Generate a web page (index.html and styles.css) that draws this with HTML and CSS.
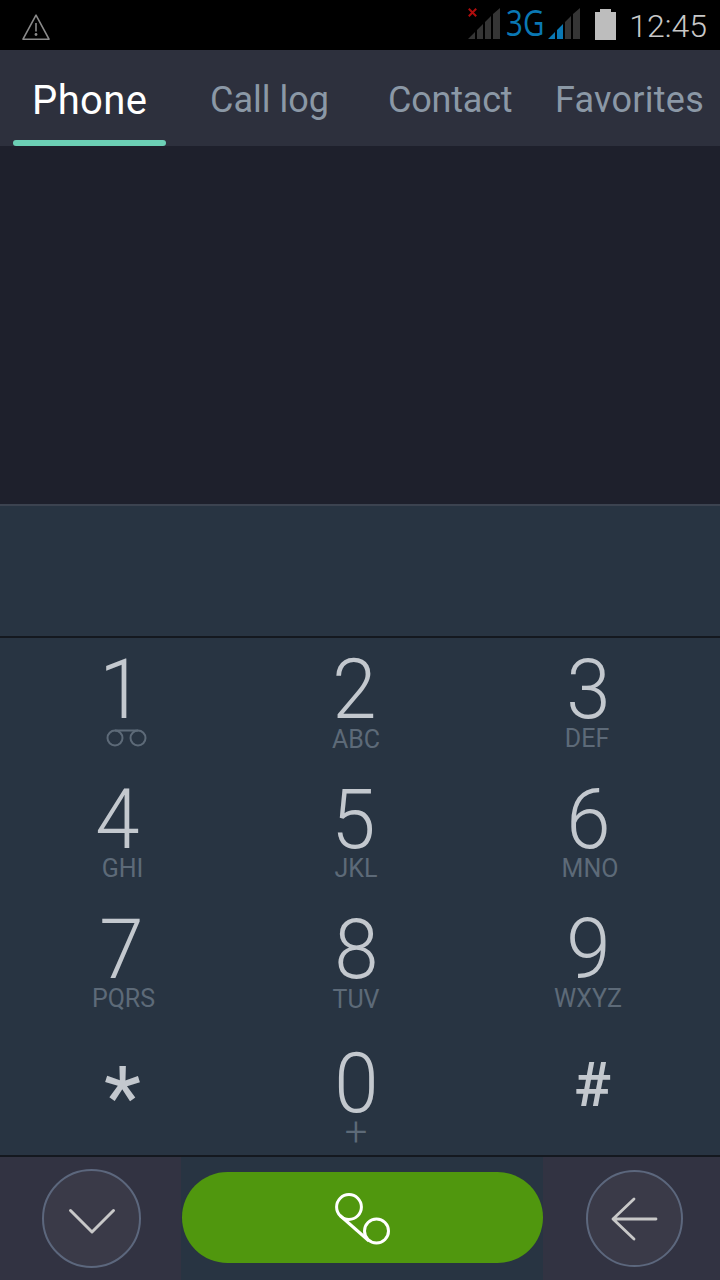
FILE: index.html
```html
<!DOCTYPE html>
<html lang="en">
<head>
<meta charset="utf-8">
<title>Phone</title>
<link rel="stylesheet" href="styles.css">
</head>
<body>
<div class="phone">
  <header class="status">
    <svg class="warn" width="30" height="28" viewBox="0 0 30 28"><path d="M15 1.2 L2 25.2 H28 Z" fill="none" stroke="#8a8a8a" stroke-width="1.6" stroke-linejoin="round"/><path d="M15 9V17.5" stroke="#8a8a8a" stroke-width="1.6"/><circle cx="15" cy="20.5" r="1.4" fill="#8a8a8a"/></svg>
    <div class="status-right">
      <svg class="sig" width="32" height="31" viewBox="0 0 32 31"><path d="M.8.8L8.2 8.2M8.2.8L.8 8.2" stroke="#b00d0d" stroke-width="2"/><path d="M0 31L7 24V31ZM9 31V22L15 16V31ZM17 31V14L23 8V31ZM25 31V6L32 0V31Z" fill="#353535"/></svg>
      <span class="net">3G</span>
      <svg class="sig sig2" width="32" height="31" viewBox="0 0 32 31"><path d="M0 31L7 24V31ZM9 31V22L15 16V31Z" fill="#0a78b4"/><path d="M17 31V14L23 8V31ZM25 31V6L32 0V31Z" fill="#353535"/></svg>
      <svg class="batt" width="21" height="31" viewBox="0 0 21 31"><path d="M5 0H16V3H21V31H0V3H5Z" fill="#bdbdbd"/></svg>
      <span class="clock">12:45</span>
    </div>
  </header>
  <nav class="tabs">
    <a class="tab tab-phone active">Phone</a>
    <a class="tab tab-log">Call log</a>
    <a class="tab tab-contact">Contact</a>
    <a class="tab tab-fav">Favorites</a>
  </nav>
  <main class="list"></main>
  <section class="entry"></section>
  <section class="keypad">
    <div class="key k1"><span class="d">1</span><svg class="vm" width="41" height="19" viewBox="0 0 41 19"><circle cx="9" cy="10" r="7.5" fill="none" stroke="#5d6a78" stroke-width="2"/><circle cx="32" cy="10" r="7.5" fill="none" stroke="#5d6a78" stroke-width="2"/><path d="M9 2.5H32" stroke="#5d6a78" stroke-width="2"/></svg></div>
    <div class="key k2"><span class="d">2</span><span class="l">ABC</span></div>
    <div class="key k3"><span class="d">3</span><span class="l">DEF</span></div>
    <div class="key k4"><span class="d">4</span><span class="l">GHI</span></div>
    <div class="key k5"><span class="d">5</span><span class="l">JKL</span></div>
    <div class="key k6"><span class="d">6</span><span class="l">MNO</span></div>
    <div class="key k7"><span class="d">7</span><span class="l">PQRS</span></div>
    <div class="key k8"><span class="d">8</span><span class="l">TUV</span></div>
    <div class="key k9"><span class="d">9</span><span class="l">WXYZ</span></div>
    <div class="key kstar"><span class="d">*</span></div>
    <div class="key k0"><span class="d">0</span><span class="l">+</span></div>
    <div class="key khash"><span class="d">#</span></div>
  </section>
  <footer class="actions">
    <div class="side side-left">
      <button class="circle"><svg class="chev" width="50" height="32" viewBox="0 0 50 32"><path d="M3.5 3.5L25 25L46.5 3.5" fill="none" stroke="#c8c8c8" stroke-width="3" stroke-linecap="round" stroke-linejoin="round"/></svg></button>
    </div>
    <div class="mid">
      <button class="call"><svg class="handset" width="60" height="60" viewBox="0 0 60 60"><circle cx="16" cy="17" r="12.4" fill="none" stroke="#fff" stroke-width="3"/><circle cx="43.5" cy="41" r="12" fill="none" stroke="#fff" stroke-width="3"/><path d="M7 25.5L36 51" stroke="#fff" stroke-width="3"/></svg></button>
    </div>
    <div class="side side-right">
      <button class="circle circle-back"><svg width="48" height="44" viewBox="0 0 48 44"><path d="M24 2L3 22L24 42M3 22H46" fill="none" stroke="#c8c8c8" stroke-width="2.8" stroke-linecap="round" stroke-linejoin="round"/></svg></button>
    </div>
  </footer>
</div>
</body>
</html>
```
FILE: styles.css
```css
* { box-sizing: border-box; }
html, body { margin: 0; padding: 0; background: #000; }
.phone { width: 720px; height: 1280px; display: flex; flex-direction: column; overflow: hidden; font-family: Roboto, "Liberation Sans", sans-serif; }

.status { height: 50px; flex: none; background: #000; display: flex; justify-content: space-between; align-items: flex-start; }
.warn { margin: 14px 0 0 21px; }
.status-right { display: flex; align-items: flex-start; padding-right: 13px; }
.sig { margin-top: 8px; }
.net { font-family: "Open Sans", sans-serif; color: #0a78b4; font-size: 36px; line-height: 36px; margin: 5px -9px 0 6px; display: block; transform: scaleX(.82); transform-origin: left center; white-space: nowrap; }
.sig2 { margin-left: 5px; }
.batt { margin: 9px 0 0 15px; }
.clock { color: #c8c8c8; font-size: 32px; font-weight: 300; line-height: 36px; margin: 8px 0 0 13px; white-space: nowrap; }

.tabs { height: 96px; flex: none; background: #2d303d; display: flex; }
.tab { font-size: 36px; line-height: 101px; color: #8b98a6; position: relative; height: 96px; display: block; white-space: nowrap; }
.tab-phone { width: 153px; margin-left: 13px; padding-left: 19px; color: #fff; font-size: 40px; line-height: 101px; letter-spacing: .4px; }
.tab-log { margin-left: 44px; width: 178px; }
.tab-contact { width: 167px; letter-spacing: -.2px; }
.tab-fav { letter-spacing: .25px; }
.active::after { content: ""; position: absolute; left: 0; right: 0; bottom: 0; height: 6px; background: #6ccfb5; border-radius: 3px; }

.list { height: 358px; flex: none; background: #1e202c; }
.entry { height: 134px; flex: none; background: #283442; border-top: 2px solid #3c4350; border-bottom: 2px solid #14181f; }

.keypad { height: 519px; flex: none; background: #283442; display: grid; grid-template-columns: 240px 232px 232px; grid-template-rows: 129px 130px 134px 124px; padding-right: 16px; border-bottom: 2px solid #14181f; }
.key { display: flex; flex-direction: column; align-items: center; }
.d { display: block; font-size: 84px; font-weight: 300; line-height: 84px; color: #c3c8ce; margin-top: 11px; transform: scaleX(.95); }
.l { display: block; font-size: 25px; line-height: 24px; color: #5d6a78; margin-top: -5px; }

.k1 .d, .k2 .d, .k3 .d { margin-top: 10px; }
.k1 .d { margin-left: 2px; }
.vm { margin: -4px 0 0 12px; }
.k2 .d { margin-right: 3px; }
.k5 .d { margin-right: 5px; }
.k2 .l, .k8 .l { margin-top: -4px; }
.k3 .l { margin-right: 2px; }
.k4 .d { margin-right: 6px; }
.k4 .l { margin-left: 5px; }
.k6 .l { margin-left: 4px; }
.k7 .d { margin-left: 2px; }
.k7 .l { margin-left: 7px; }
.kstar .d { font-weight: 400; font-size: 86px; margin: 25px 0 0 5px; transform: none; }
.khash .d { font-weight: 500; font-size: 62px; margin: 12px 0 0 9px; transform: none; }
.k0 .l { font-size: 40px; font-weight: 300; margin-top: -5px; }

.actions { flex: 1; background: #323342; display: flex; }
.side { display: flex; align-items: center; justify-content: center; }
.side-left { width: 181px; padding-left: 2px; }
.side-right { width: 177px; padding-left: 5px; }
.mid { width: 362px; background: #283442; display: flex; align-items: center; justify-content: flex-end; padding-bottom: 2px; }
.circle { width: 99px; height: 99px; border-radius: 50%; border: 2px solid #5c677d; background: #3a3a48; display: flex; align-items: center; justify-content: center; padding: 0; }
.circle-back { width: 97px; height: 97px; }
.chev { margin-top: 8px; }
.call { width: 361px; height: 91px; border-radius: 46px; background: #50970e; border: 0; display: flex; align-items: center; justify-content: center; padding: 0; }
.handset { margin-top: 5px; }
```
